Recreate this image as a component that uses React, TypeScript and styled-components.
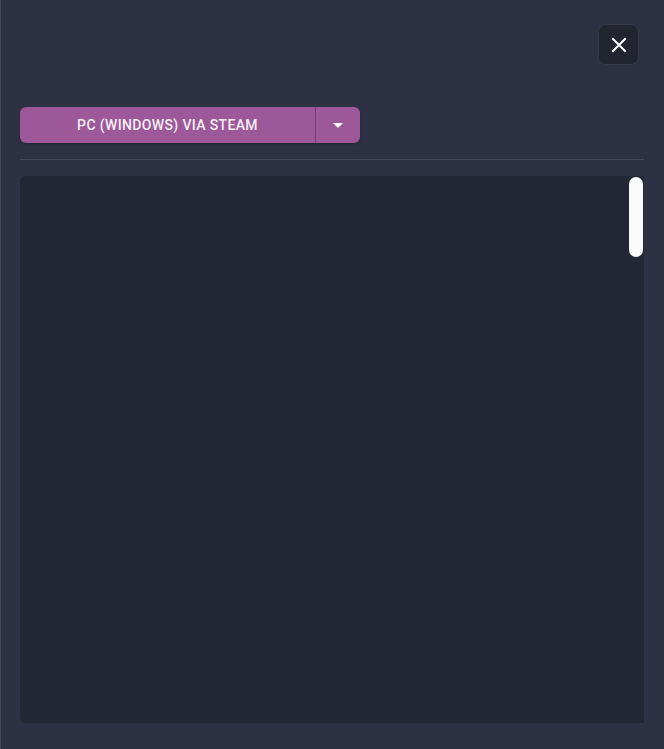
import React from 'react'
import styled, { createGlobalStyle } from 'styled-components'

const GlobalStyle = createGlobalStyle`
  html, body {
    margin: 0;
    padding: 0;
    background: #2e3144;
  }
  body {
    font-family: Roboto, "Liberation Sans", sans-serif;
  }
`

const Modal = styled.div`
  background: #2e3144;
  border-left: 1px solid #45485a;
  box-sizing: border-box;
  display: flex;
  flex-direction: column;
  height: 749px;
  padding: 24px 20px 26px 19px;
  width: 664px;
`

const Header = styled.div`
  display: flex;
  justify-content: flex-end;
  padding-right: 5px;
`

const CloseButton = styled.button`
  align-items: center;
  background: #222530;
  border: 1px solid #363948;
  border-radius: 8px;
  color: #ffffff;
  cursor: pointer;
  display: flex;
  height: 41px;
  justify-content: center;
  padding: 0;
  width: 41px;
`

const Toolbar = styled.div`
  border-bottom: 1px solid #45485a;
  display: flex;
  margin-top: 42px;
  padding-bottom: 16px;
`

const SplitButton = styled.div`
  background: #9c5898;
  border-radius: 6px;
  box-shadow: 0 1px 2px rgba(0, 0, 0, 0.25);
  display: flex;
  height: 36px;
  width: 340px;
`

const MainAction = styled.button`
  background: transparent;
  border: none;
  border-right: 1px solid #7a3d77;
  color: #f4eef4;
  cursor: pointer;
  flex: 1;
  font-family: Roboto, "Liberation Sans", sans-serif;
  font-size: 14px;
  font-weight: 500;
  letter-spacing: 0.35px;
  padding: 0;
`

const MenuToggle = styled.button`
  align-items: center;
  background: transparent;
  border: none;
  cursor: pointer;
  display: flex;
  justify-content: center;
  padding: 0;
  width: 44px;
`

const Caret = styled.span`
  border-left: 5px solid transparent;
  border-right: 5px solid transparent;
  border-top: 5px solid #ffffff;
  height: 0;
  width: 0;
`

const Panel = styled.div`
  background: #232633;
  border-radius: 6px 0 0 6px;
  flex: 1;
  margin-top: 16px;
  position: relative;
`

const ScrollThumb = styled.div`
  background: #fafafa;
  border-radius: 7px;
  height: 80px;
  position: absolute;
  right: 1px;
  top: 1px;
  width: 14px;
`

export default function App() {
  return (
    <>
      <GlobalStyle />
      <Modal>
        <Header>
          <CloseButton aria-label="Close">
            <svg width="16" height="16" viewBox="0 0 16 16">
              <path d="M2 2L14 14M14 2L2 14" stroke="#ffffff" strokeWidth="2" strokeLinecap="square" />
            </svg>
          </CloseButton>
        </Header>
        <Toolbar>
          <SplitButton>
            <MainAction>PC (WINDOWS) VIA STEAM</MainAction>
            <MenuToggle aria-label="More platforms">
              <Caret />
            </MenuToggle>
          </SplitButton>
        </Toolbar>
        <Panel>
          <ScrollThumb />
        </Panel>
      </Modal>
    </>
  )
}
